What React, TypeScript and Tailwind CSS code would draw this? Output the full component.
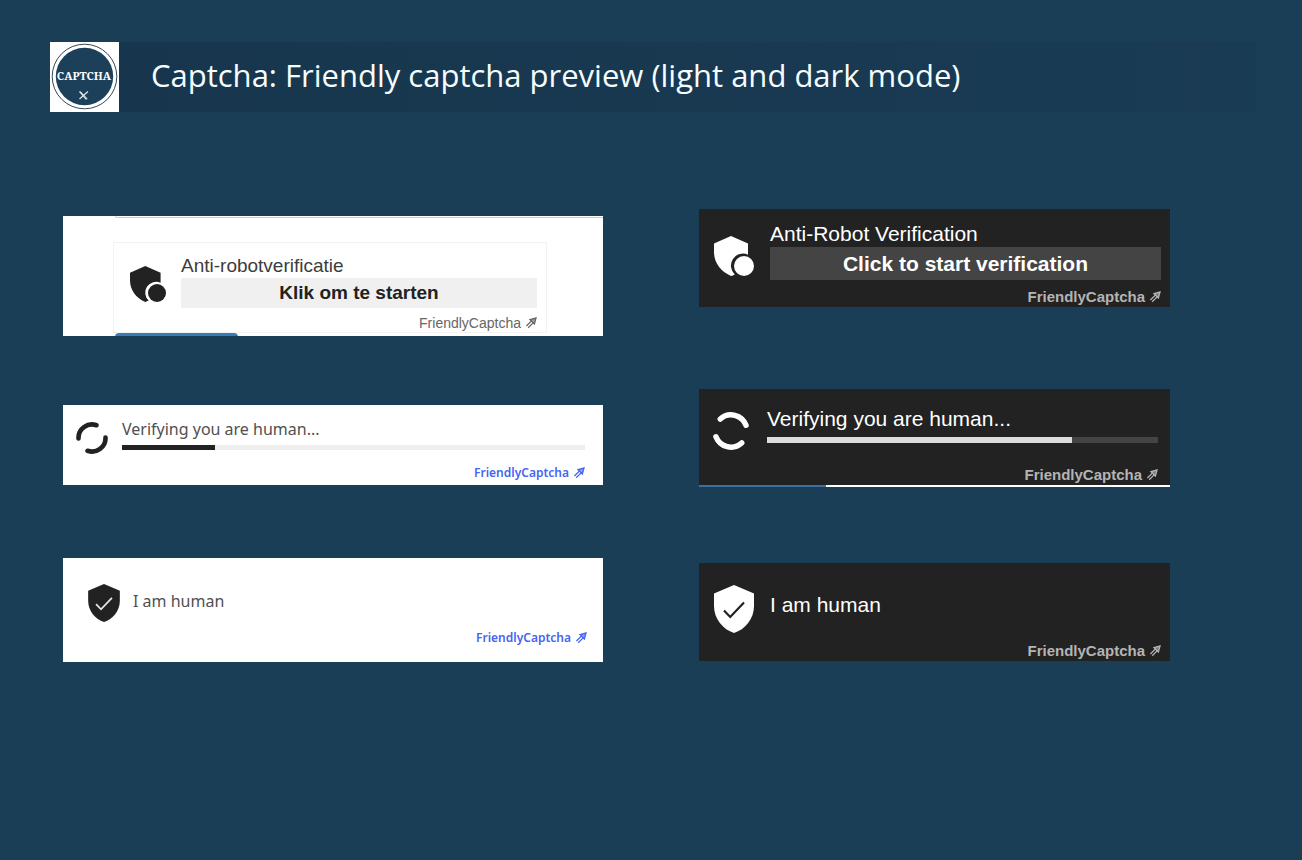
import type { ReactNode } from "react";
import clsx from "clsx";

type Theme = "outline" | "light" | "dark";

const linkStyle: Record<Theme, string> = {
  outline: "text-[14px] leading-4 text-[#666666]",
  light: "font-['Noto_Sans',sans-serif] text-[12px] leading-4 font-semibold text-[#4664f0]",
  dark: "text-[15px] leading-4 font-bold text-[#b4b4b4]",
};

function FriendlyLink({ theme, className }: { theme: Theme; className?: string }) {
  return (
    <a href="#friendlycaptcha" className={clsx("flex items-center gap-1 self-end", linkStyle[theme], className)}>
      FriendlyCaptcha
      <svg viewBox="0 0 12 12" className="size-3" fill="none" stroke="currentColor" strokeWidth="1.3">
        <path d="M5 2.6 11 1 9.4 7z" fill="currentColor" fillOpacity=".6" />
        <path d="M6.8 3.6 1.4 9M8.6 5.4l-5.4 5.4" />
      </svg>
    </a>
  );
}

// Shield with a dot that is cut out of its lower right corner
function ShieldDot({ className }: { className?: string }) {
  return (
    <svg viewBox="0 0 40 40" className={clsx("shrink-0", className)} fill="currentColor">
      <path d="M17 0 34 7.5V18.7A12 12 0 0 0 20.8 38.4Q18.8 39.5 17 40C6 35 0 26 0 16V7.5z" />
      <circle cx="30" cy="30" r="10" />
    </svg>
  );
}

function ShieldCheck({ className, mark }: { className?: string; mark: string }) {
  return (
    <svg viewBox="0 0 40 48" className={clsx("shrink-0", className)}>
      <path d="M20 0 40 8.6V21C40 34 31 44.5 20 48 9 44.5 0 34 0 21V8.6z" fill="currentColor" />
      <path d="M10 25.5 16.2 32 30 17.5" fill="none" stroke={mark} strokeWidth="2.2" />
    </svg>
  );
}

function Spinner({ className }: { className?: string }) {
  return (
    <svg
      viewBox="0 0 36 36"
      className={clsx("shrink-0", className)}
      fill="none"
      stroke="currentColor"
      strokeWidth="5.2"
      strokeLinecap="round"
    >
      <path d="M2.8 18.5A15.2 15.2 0 0 1 23 3.6" />
      <path d="M33.2 17.5A15.2 15.2 0 0 1 13 32.4" />
    </svg>
  );
}

function Progress({ label, value, track, bar }: { label: string; value: number; track: string; bar: string }) {
  return (
    <div role="progressbar" aria-label={label} aria-valuenow={value} className={clsx("w-full", track)}>
      <div className={clsx("h-full", bar)} style={{ width: `${value}%` }} />
    </div>
  );
}

function DarkCard({ children }: { children: ReactNode }) {
  return <section className="flex h-[98px] flex-col bg-[#222222] text-white">{children}</section>;
}

function Logo() {
  return (
    <svg viewBox="0 0 69 70" className="h-[70px] w-[69px] shrink-0" role="img" aria-label="CaptchaX">
      <rect width="69" height="70" fill="#ffffff" />
      <circle cx="34.5" cy="34.5" r="32.3" fill="none" stroke="#33475a" strokeWidth="1" />
      <circle cx="34.5" cy="34.5" r="28.7" fill="#1c405a" />
      <text
        x="34"
        y="38"
        textAnchor="middle"
        fill="#ffffff"
        className="font-['Noto_Serif','DejaVu_Serif',serif] text-[11px] font-bold"
      >
        CAPTCHA
      </text>
      <path d="m29.5 49.5 7 8M38 49.5l-8.5 7.5" stroke="#dfe6ea" strokeWidth="1.2" />
      <path d="m30.5 49.5 7 7.5" stroke="#dfe6ea" strokeWidth=".8" />
    </svg>
  );
}

export default function App() {
  return (
    <div className="min-h-screen bg-[#1a3e55] pt-[42px] font-['Liberation_Sans',Arial,sans-serif]">
      <header className="mr-[46px] ml-[50px] flex items-center gap-8 bg-linear-to-r from-[#17364e] to-[#193b53]">
        <Logo />
        <h1 className="pb-1 font-['Open_Sans',sans-serif] text-[31px] leading-10 text-[#f6fdff]">
          Captcha: Friendly captcha preview (light and dark mode)
        </h1>
      </header>

      <main className="mt-[97px] mr-[132px] ml-[63px] grid grid-cols-[540fr_471fr] items-start gap-24">
        <div className="flex flex-col pt-[7px]">
          {/* Start, light */}
          <section className="flex h-[120px] flex-col overflow-hidden bg-white text-[#222222]">
            <div className="ml-[52px] h-0.5 shrink-0 rounded-bl border-b border-l border-[#cccccc]" />
            <div className="mt-6 mr-14 ml-[50px] flex h-[91px] shrink-0 flex-col border border-[#f2f2f2] pr-[9px] pl-4">
              <div className="flex pt-[11px]">
                <ShieldDot className="mt-3 size-9" />
                <div className="ml-[15px] flex-1">
                  <p className="text-[19px] leading-6 text-[#3c3c3c]">Anti-robotverificatie</p>
                  <button className="block h-[30px] w-full bg-[#f0f0f0] text-[19px] font-bold">
                    Klik om te starten
                  </button>
                </div>
              </div>
              <FriendlyLink theme="outline" className="mt-[7px]" />
            </div>
            <div className="ml-[52px] h-4 w-[123px] shrink-0 rounded bg-[#3a7cb8]" />
          </section>

          {/* Verifying, light */}
          <section className="mt-[69px] flex h-20 flex-col bg-white pr-[18px] pl-[13px] text-[#222222]">
            <div className="flex pt-4">
              <Spinner className="mt-px size-8" />
              <div className="ml-3.5 flex-1">
                <p className="font-['Noto_Sans',sans-serif] text-[16px] leading-4 text-[#505050]">
                  Verifying you are human...
                </p>
                <div className="mt-2">
                  <Progress label="Verifying" value={20} track="h-[5px] bg-[#eeeeee]" bar="bg-[#222222]" />
                </div>
              </div>
            </div>
            <FriendlyLink theme="light" className="mt-[11px]" />
          </section>

          {/* Done, light */}
          <section className="mt-[73px] flex h-[104px] flex-col bg-white pr-4 pl-[25px] text-[#222222]">
            <div className="flex items-center gap-[13px] pt-[26px]">
              <ShieldCheck className="h-[38px] w-8" mark="#e6e6e6" />
              <p className="pb-1 font-['Noto_Sans',sans-serif] text-[16px] leading-5 text-[#505050]">I am human</p>
            </div>
            <FriendlyLink theme="light" className="mt-2" />
          </section>
        </div>

        <div className="flex flex-col">
          {/* Start, dark */}
          <DarkCard>
            <div className="flex pt-[13px] pr-[9px] pl-[15px]">
              <ShieldDot className="mt-3.5 size-10" />
              <div className="ml-4 flex-1">
                <p className="pb-px text-[21px] leading-6">Anti-Robot Verification</p>
                <button className="block h-[33px] w-full bg-[#444444] text-[21px] font-bold">
                  Click to start verification
                </button>
              </div>
            </div>
            <FriendlyLink theme="dark" className="mt-[9px] mr-[9px]" />
          </DarkCard>

          {/* Verifying, dark */}
          <div className="mt-[82px]">
            <DarkCard>
              <div className="flex pt-[18px] pr-3 pl-[13px]">
                <Spinner className="mt-[5px] size-[38px] rotate-50" />
                <div className="ml-[17px] flex-1">
                  <p className="text-[21px] leading-6">Verifying you are human...</p>
                  <div className="mt-1.5">
                    <Progress label="Verifying" value={78} track="h-1.5 bg-[#444444]" bar="bg-[#dddddd]" />
                  </div>
                </div>
              </div>
              <FriendlyLink theme="dark" className="mt-[17px] mr-3" />
              <div className="mt-auto flex h-0.5 shrink-0 bg-white">
                <div className="w-[27%] bg-[#3a6f9f]" />
              </div>
            </DarkCard>
          </div>

          {/* Done, dark */}
          <div className="mt-[76px]">
            <DarkCard>
              <div className="flex items-center gap-4 pt-[22px] pl-[15px]">
                <ShieldCheck className="h-12 w-10" mark="#222222" />
                <p className="pb-2 text-[21px] leading-6">I am human</p>
              </div>
              <FriendlyLink theme="dark" className="mt-[10px] mr-[9px]" />
            </DarkCard>
          </div>
        </div>
      </main>
    </div>
  );
}
